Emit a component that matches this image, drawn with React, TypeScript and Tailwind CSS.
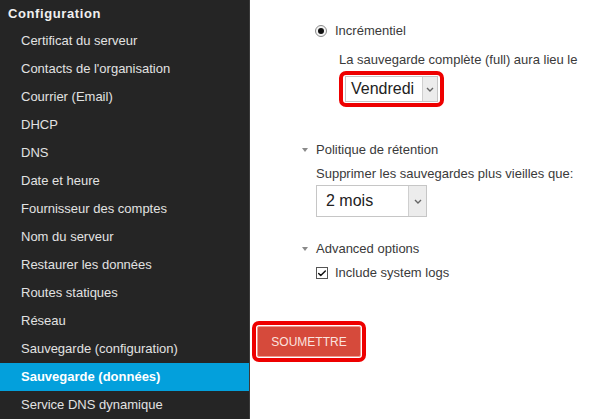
import { Check } from "lucide-react";

const MENU = [
  "Certificat du serveur",
  "Contacts de l'organisation",
  "Courrier (Email)",
  "DHCP",
  "DNS",
  "Date et heure",
  "Fournisseur des comptes",
  "Nom du serveur",
  "Restaurer les données",
  "Routes statiques",
  "Réseau",
  "Sauvegarde (configuration)",
  "Sauvegarde (données)",
  "Service DNS dynamique",
];

const ACTIVE = "Sauvegarde (données)";

function Chevron() {
  return (
    <svg width="8" height="5" viewBox="0 0 8 5" fill="none">
      <path d="M1 1l3 3 3-3" stroke="#666" strokeWidth="1.4" />
    </svg>
  );
}

function Caret() {
  return <span className="inline-block w-0 h-0 border-l-[3.5px] border-r-[3.5px] border-t-[4px] border-l-transparent border-r-transparent border-t-[#8a8a8a]" />;
}

function Select({ value, w, h, arrowW, pl }: { value: string; w: number; h: number; arrowW: number; pl: number }) {
  return (
    <div className="flex bg-white border border-[#c6c6c6] text-[16px] text-[#222]" style={{ width: w, height: h }}>
      <div className="flex-1 flex items-center" style={{ paddingLeft: pl }}>{value}</div>
      <div className="flex items-center justify-center bg-[#ececec] border-l border-[#cfcfcf]" style={{ width: arrowW }}>
        <Chevron />
      </div>
    </div>
  );
}

export default function App() {
  return (
    <div className="flex w-[600px] h-[419px] overflow-hidden" style={{ fontFamily: '"Liberation Sans", Arial, sans-serif' }}>
      {/* Menu latéral */}
      <div className="w-[250px] h-full bg-[#252525] border-r border-[#3a3a3a] shrink-0">
        <div className="h-[27px] flex items-center pl-[8px] text-[13px] font-bold tracking-[0.6px] text-[#f0f0f0]">Configuration</div>
        {MENU.map((m) => (
          <div
            key={m}
            className={
              m === ACTIVE
                ? "h-[28px] flex items-center pl-[21px] text-[13px] font-bold text-white bg-[#03a0dc]"
                : "h-[28px] flex items-center pl-[21px] text-[13px] text-[#e2e2e2]"
            }
          >
            {m}
          </div>
        ))}
      </div>

      {/* Contenu */}
      <div className="flex-1 bg-white text-[13px] text-[#3a3a3a] pt-[23px]">
        <div className="ml-[65px] h-[16px] flex items-center gap-[8px]">
          <span className="w-[12px] h-[12px] rounded-full border border-[#8a8a8a] bg-[#f4f4f4] flex items-center justify-center">
            <span className="w-[6px] h-[6px] rounded-full bg-[#111]" />
          </span>
          <span>Incrémentiel</span>
        </div>

        <div className="ml-[89px] mt-[13px]">
          <div className="h-[16px] leading-[16px]">La sauvegarde complète (full) aura lieu le</div>
          <div className="mt-[3px] inline-flex border-[4px] border-[#ee0000] rounded-[7px] px-[2px] py-[1px]">
            <Select value="Vendredi" w={93} h={26} arrowW={15} pl={5} />
          </div>
        </div>

        <div className="ml-[52px] mt-[35px] h-[16px] flex items-center gap-[8px]">
          <Caret />
          <span>Politique de rétention</span>
        </div>
        <div className="ml-[66px] mt-[8px] h-[16px] leading-[16px]">Supprimer les sauvegardes plus vieilles que:</div>
        <div className="ml-[66px] mt-[3px]">
          <Select value="2 mois" w={111} h={32} arrowW={18} pl={9} />
        </div>

        <div className="ml-[52px] mt-[24px] h-[16px] flex items-center gap-[8px]">
          <Caret />
          <span>Advanced options</span>
        </div>
        <div className="ml-[66px] mt-[8px] h-[16px] flex items-center gap-[7px]">
          <span className="w-[12px] h-[12px] border border-[#555] bg-white flex items-center justify-center">
            <Check size={11} strokeWidth={3.5} className="text-[#111]" />
          </span>
          <span>Include system logs</span>
        </div>

        <div className="ml-[2px] mt-[40px] inline-flex border-[4px] border-[#ee0000] rounded-[7px] p-[1px]">
          <div className="w-[104px] h-[31px] flex items-center justify-center bg-[#d64a3b] border border-[#ee9a90] rounded-[2px] text-[12px] text-[#fbe3df]">
            SOUMETTRE
          </div>
        </div>
      </div>
    </div>
  );
}
